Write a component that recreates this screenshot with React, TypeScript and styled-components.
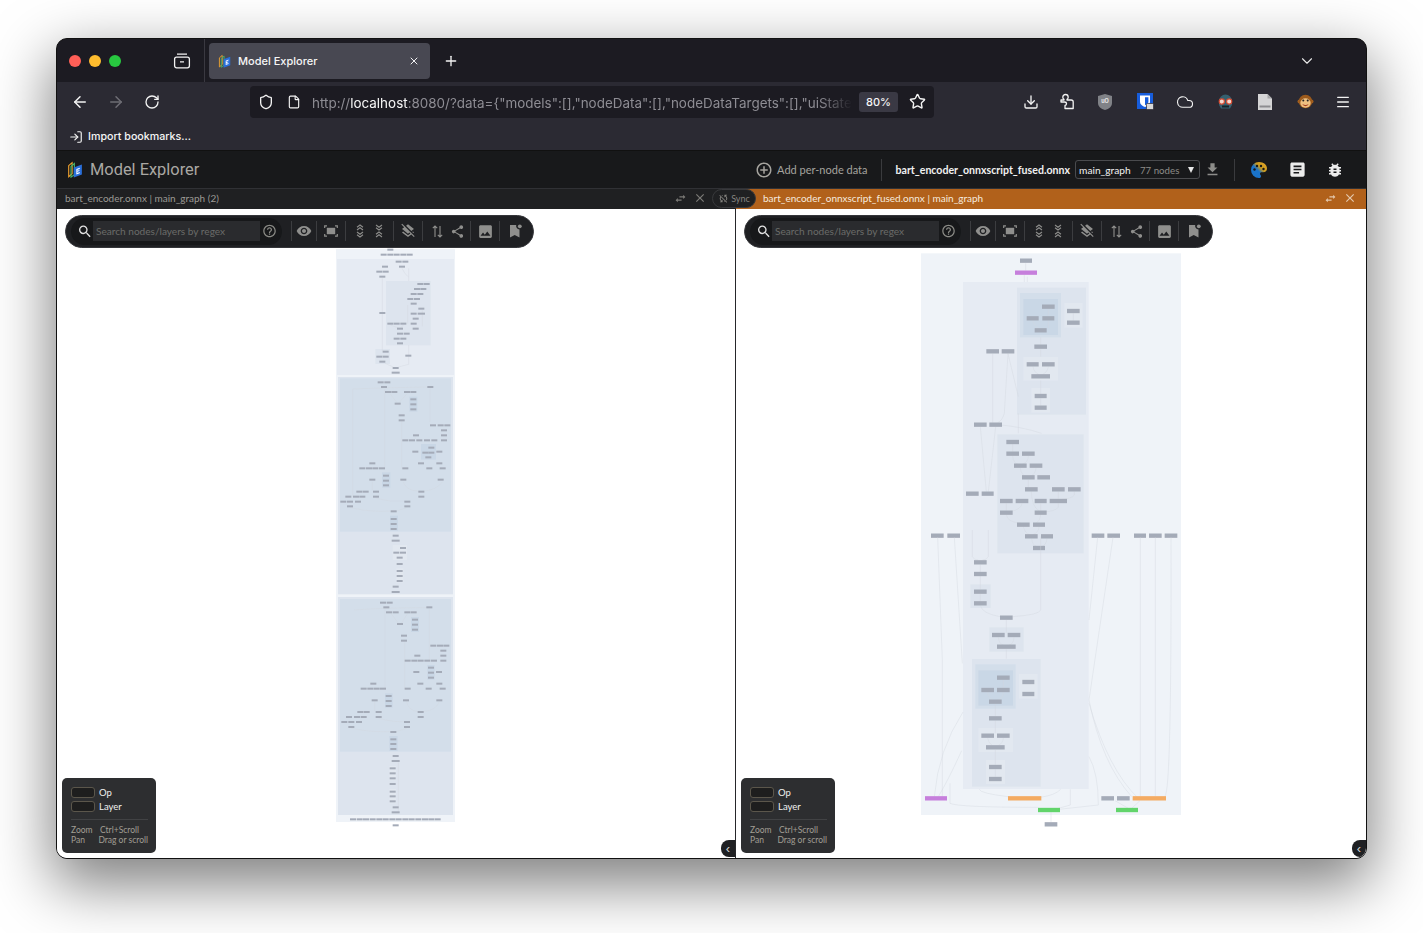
import React from 'react'
import styled, { createGlobalStyle } from 'styled-components'
import { ArrowLeft, ArrowRight, ChevronDown, Cloud, Download, File, LogIn, Menu, Plus, RotateCw, Shield, Star, X } from 'lucide-react'
import { MdArticle, MdBugReport, MdClose, MdFileDownload, MdHelpOutline, MdImage, MdLayersClear, MdOutlineAddCircleOutline, MdSearch, MdShare, MdSwapHoriz, MdSyncDisabled, MdVisibility } from 'react-icons/md'

type GraphNode = [number, number, number?, string?]
type Box = [number, number, number, number, string]

interface Section {
    ox: number
    oy: number
    boxes: Box[]
    nodes: GraphNode[]
    edges: string[]
}

const L0 = '#eff3f8'
const L1 = '#e6ebf3'
const L1B = '#e2e8f0'
const L2 = '#dde4ee'
const L3 = '#d3deea'
const L4 = '#c9d7e6'

const leftGraph: Section[] = [
    {
        ox: 330,
        oy: 245,
        boxes: [
            [18, 12, 375, 1731, L0],
            [21, 42, 372, 390, L1],
            [168, 108, 302, 301, L2],
            [136, 312, 180, 357, L2],
        ],
        nodes: [
            [181, 14], [161, 29], [181, 29], [200, 29], [220, 29], [239, 29], [206, 50], [226, 50], [165, 65], [216, 65],
            [148, 80], [167, 80], [157, 95], [271, 117], [290, 117], [261, 132], [280, 132], [251, 147], [271, 147],
            [241, 162], [261, 162], [251, 176], [274, 191], [251, 206], [274, 206, 22], [157, 204], [257, 221], [181, 236],
            [200, 236], [220, 236], [251, 236], [210, 251], [257, 251], [210, 266], [230, 266], [200, 281], [220, 281],
            [210, 295], [167, 320], [148, 335], [167, 335], [157, 350], [235, 332], [197, 369], [197, 383, 24],
        ],
        edges: ['M157 100V318', 'M236 70V108', 'M236 300V358', 'M216 70Q225 90 236 96', 'M233 180V236', 'M277 196V244', 'M181 240L210 251', 'M220 240L210 251', 'M165 355L190 366', 'M236 358L205 366'],
    },
    {
        ox: 330,
        oy: 375,
        boxes: [
            [24, 6, 369, 658, L2],
            [30, 10, 363, 470, L3],
            [238, 65, 262, 110, L4],
            [273, 207, 318, 254, L4],
            [156, 292, 181, 338, L4],
            [180, 422, 204, 467, L4],
            [188, 510, 231, 555, L1B],
            [199, 580, 220, 623, L1B],
        ],
        nodes: [
            [152, 22], [172, 22], [162, 36], [301, 36], [174, 51], [193, 51], [231, 51], [250, 51], [250, 73], [250, 88],
            [250, 103], [203, 86], [215, 121], [215, 136], [309, 151], [332, 151], [352, 151], [342, 166], [258, 181],
            [342, 181], [226, 196], [246, 196], [268, 196], [291, 196], [313, 196], [342, 196], [304, 218], [286, 233],
            [304, 233], [295, 247], [256, 230], [328, 230], [273, 265], [328, 265], [127, 265], [97, 280], [117, 280],
            [136, 280], [156, 280], [226, 280], [298, 280], [338, 280], [168, 302], [168, 317], [168, 331], [127, 314],
            [220, 314], [332, 314], [88, 350], [107, 350], [138, 350], [274, 350], [55, 365], [78, 365], [97, 365],
            [138, 365], [274, 365], [40, 380], [60, 380], [84, 380], [232, 380], [60, 394], [232, 394], [191, 409],
            [191, 432], [191, 447], [191, 462], [197, 482], [197, 497, 24], [219, 519], [199, 533], [219, 533], [209, 548],
            [209, 567], [209, 588], [209, 603], [209, 618], [197, 635], [197, 651, 24],
        ],
        edges: ['M68 42V365', 'M164 42V280', 'M215 140V280', 'M68 42Q160 38 295 36', 'M127 320V346', 'M220 320Q225 345 265 349', 'M338 320Q320 345 280 349', 'M138 370Q180 382 225 378', 'M60 398Q120 412 185 408', 'M230 398L200 408', 'M180 56L200 82', 'M231 56L208 82', 'M300 40V140', 'M256 185L256 192'],
    },
    {
        ox: 330,
        oy: 595,
        boxes: [
            [24, 6, 369, 660, L2],
            [30, 12, 363, 470, L3],
            [243, 66, 267, 111, L4],
            [292, 210, 314, 254, L4],
            [165, 295, 188, 338, L4],
            [178, 423, 203, 468, L4],
            [178, 513, 198, 556, L1B],
            [178, 582, 198, 625, L1B],
        ],
        nodes: [
            [159, 23], [179, 23], [169, 37], [298, 37], [177, 52], [197, 52], [232, 52], [251, 52], [255, 74], [255, 89],
            [255, 104], [210, 87], [222, 122], [222, 137], [310, 152], [330, 152], [349, 152], [340, 167], [340, 182],
            [262, 182], [233, 197], [253, 197], [272, 197], [292, 197], [312, 197], [340, 197], [303, 218], [303, 233],
            [303, 248], [259, 231], [327, 231], [271, 266], [328, 266], [130, 266], [101, 281], [121, 281], [140, 281],
            [159, 281], [233, 281], [296, 281], [338, 281], [176, 303], [176, 318], [176, 333], [134, 316], [228, 316],
            [328, 316], [91, 351], [110, 351], [146, 351], [272, 351], [57, 366], [81, 366], [101, 366], [146, 366],
            [272, 366], [43, 381], [64, 381], [87, 381], [231, 381], [64, 396], [231, 396], [190, 411], [190, 433],
            [190, 447], [190, 462], [197, 483], [197, 498, 24], [188, 520], [188, 535], [188, 550], [188, 567], [188, 590],
            [188, 604], [188, 619], [197, 637], [197, 652, 24],
            [69, 673], [89, 673], [108, 673], [128, 673], [148, 673], [167, 673], [187, 673], [206, 673], [226, 673],
            [245, 673], [265, 673], [285, 673], [304, 673], [323, 673], [197, 691],
        ],
        edges: ['M165 42V280', 'M298 42V197', 'M224 140V280', 'M205 502V650', 'M72 45Q160 38 292 38', 'M134 320V348', 'M230 320Q235 348 265 350', 'M328 320Q320 345 280 350', 'M146 370Q190 382 225 380', 'M64 400Q120 412 185 410', 'M230 400L198 410', 'M183 56L205 84', 'M232 56L215 84'],
    },
]

const rightGraph: Section[] = [
    {
        ox: 915,
        oy: 250,
        boxes: [
            [18, 10, 798, 1695, L0],
            [144, 96, 521, 1617, L1],
            [306, 113, 513, 494, L2],
            [315, 129, 438, 262, L3],
            [325, 147, 429, 255, L4],
            [448, 159, 503, 233, L1B],
            [325, 321, 429, 392, L1B],
            [349, 414, 405, 488, L1B],
            [247, 553, 506, 910, L2],
        ],
        nodes: [
            [333, 32, 36], [333, 68, 66, 'purple'], [400, 170, 38], [353, 205, 36], [400, 205, 36], [377, 241, 36],
            [475, 183, 38], [475, 218, 38], [377, 290, 38], [233, 304, 38], [279, 304, 38], [353, 343, 36], [400, 343, 38],
            [377, 379, 56], [377, 438, 36], [377, 473, 36], [196, 524, 38], [242, 524, 38], [293, 576, 38], [293, 611, 38],
            [340, 611, 38], [316, 647, 38], [363, 647, 38], [340, 682, 38], [386, 682, 38], [349, 718, 38], [430, 718, 38],
            [478, 718, 38], [172, 731, 38], [218, 731, 36], [274, 753, 38], [321, 753, 38], [377, 753, 36], [430, 753, 52],
            [274, 788, 38], [377, 788, 36], [325, 824, 38], [372, 824, 36], [349, 859, 38], [396, 859, 36], [372, 894, 36],
            [67, 857, 38], [116, 857, 38], [549, 857, 38], [596, 857, 38], [675, 857, 36], [721, 857, 38], [768, 857, 38],
        ],
        edges: [
            'M332 40V62', 'M328 75V96', 'M337 80V96', 'M400 178V198', 'M353 212Q360 232 372 236', 'M400 212V234', 'M475 190V212',
            'M377 262V284', 'M377 298V320', 'M354 350Q356 366 372 374', 'M400 350Q398 366 382 374', 'M377 392V432', 'M377 445V467',
            'M233 311V518', 'M279 311Q272 420 268 490Q262 512 248 518', 'M279 311L310 440', 'M248 524Q320 530 380 550', 'M310 490V550',
            'M196 530L214 725', 'M242 530L220 725', 'M293 582V605', 'M293 618Q295 640 310 643', 'M340 618Q340 636 322 643',
            'M316 654Q318 676 335 680', 'M363 654Q362 672 345 680', 'M340 690V712', 'M349 724Q350 770 372 782', 'M430 725V746',
            'M478 725V735Q470 746 440 748', 'M274 760V782', 'M321 760Q320 778 285 785', 'M377 760V782', 'M430 760V772Q420 784 385 786',
            'M274 794Q276 816 318 820', 'M377 794Q376 812 362 820', 'M325 830Q330 850 344 854', 'M372 830Q372 846 354 854', 'M350 866Q352 886 366 890', 'M396 866Q394 886 378 890',
        ],
    },
    {
        ox: 915,
        oy: 530,
        boxes: [
            [166, 163, 227, 234, L2],
            [223, 292, 326, 365, L2],
            [171, 387, 377, 770, L2],
            [181, 403, 302, 536, L3],
            [190, 421, 294, 527, L4],
            [312, 432, 368, 506, L1B],
            [190, 594, 294, 666, L1B],
            [213, 690, 270, 762, L1B],
        ],
        nodes: [
            [196, 97, 38], [196, 132, 38], [196, 185, 38], [196, 220, 38], [274, 263, 38], [250, 315, 38], [297, 315, 38],
            [274, 350, 56], [265, 443, 38], [218, 480, 38], [265, 480, 38], [241, 515, 38], [340, 456, 36], [340, 492, 36],
            [241, 565, 38], [218, 617, 38], [265, 617, 38], [241, 652, 56], [241, 711, 38], [241, 747, 38],
            [63, 805, 66, 'purple'], [329, 805, 100, 'orange'], [578, 805, 38], [625, 805, 38], [703, 805, 100, 'orange'],
            [402, 840, 66, 'green'], [636, 840, 66, 'green'], [408, 883, 38],
        ],
        edges: [
            'M172 0V80Q176 90 190 90', 'M220 0V80Q216 90 202 90', 'M196 104V126', 'M196 138V178', 'M196 192V214', 'M196 226Q200 250 255 260',
            'M377 20V240Q374 254 294 260', 'M274 270V308', 'M250 322Q252 342 265 345', 'M297 322Q296 342 282 345', 'M274 358V386',
            'M265 450V474', 'M218 487Q220 505 234 510', 'M265 487Q265 505 248 510', 'M241 522V558', 'M241 572V610',
            'M218 624Q220 640 232 646', 'M265 624Q264 640 250 646', 'M241 660V704', 'M241 718V740',
            'M68 22L82 390V800', 'M118 22L142 400', 'M144 546Q70 660 58 800', 'M140 662Q100 750 70 800', 'M105 760V820Q130 832 370 832',
            'M193 778Q195 790 280 800', 'M437 778Q420 796 375 802', 'M466 778V825L430 835', 'M548 22L522 270', 'M594 22L522 510Q560 700 650 800',
            'M522 520Q580 720 670 805', 'M676 22V798', 'M721 22V798', 'M768 22Q770 780 750 798', 'M522 680Q550 730 550 825L432 838',
            'M600 812L640 835', 'M675 812L650 835', 'M408 846V876',
        ],
    },
]

const nodeFill: Record<string, string> = {
    purple: '#c67fdc',
    orange: '#f4ab62',
    green: '#62d46b',
}

const Graph: React.FC<{ data: Section[]; viewBox: string; nodeHeight: number; defaultWidth: number }> = ({ data, viewBox, nodeHeight, defaultWidth }) => (
    <GraphSvg viewBox={viewBox}>
        {data.map(s => (
            <g key={`${s.ox}-${s.oy}`} transform={`translate(${s.ox} ${s.oy}) scale(${1 / 3})`}>
                {s.boxes.map(([x0, y0, x1, y1, color]) => (
                    <rect key={`${x0}-${y0}`} x={x0} y={y0} width={x1 - x0} height={y1 - y0} fill={color} />
                ))}
                <g fill="none" stroke="#d2d6dd" strokeWidth={1.2}>
                    {s.edges.map(d => (
                        <path key={d} d={d} />
                    ))}
                </g>
                {s.nodes.map(([cx, cy, w = defaultWidth, kind], i) => (
                    <rect key={i} x={cx - w / 2} y={cy - nodeHeight / 2} width={w} height={nodeHeight} fill={kind ? nodeFill[kind] : '#a4abb8'} />
                ))}
            </g>
        ))}
    </GraphSvg>
)

const BookLogo: React.FC<{ size: number }> = ({ size }) => (
    <svg width={size} height={size} viewBox="0 0 18 20">
        <path d="M1 5.500 5 2v13l-4 3.500z" fill="none" stroke="#f0a32f" strokeWidth="1.300" />
        <path d="M3.700 6.500 7.700 3v13l-4 3z" fill="none" stroke="#45b36b" strokeWidth="1.300" />
        <path d="M7 7.500 16.500 4v12L7 19.500z" fill="#2a6fdb" />
        <path d="M10 9.500 14 8v1.300l-2.800 1v1.200l2.400-.9v1.200l-2.400.9v1.300l2.800-1v1.300l-4 1.500z" fill="#fff" />
    </svg>
)

const ArchiveIcon = () => (
    <svg width="18" height="16" viewBox="0 0 18 16" fill="none" stroke="#f3f3f3" strokeWidth="1.3">
        <rect x="1.6" y="4.2" width="14.8" height="10.6" rx="2" />
        <path d="M4 1.2h10M7 8.8h4" />
    </svg>
)

const FitIcon = () => (
    <svg width="14" height="12" viewBox="0 0 14 12" fill="none" stroke="currentColor" strokeWidth="1.2">
        <path d="M.7 3V.8H3M11 .8h2.300V3M13.300 9v2.200H11M3 11.200H.7V9" />
        <rect x="2.800" y="2.800" width="8.400" height="6.400" fill="currentColor" stroke="none" />
    </svg>
)

const StackedChevrons: React.FC<{ inward?: boolean }> = ({ inward }) => (
    <svg width="8" height="14" viewBox="0 0 8 14" fill="none" stroke="currentColor" strokeWidth="1.1">
        {inward ? <path d="M1 1l3 2.200L7 1M1 3.800 4 6l3-2.200M1 10.200 4 8l3 2.200M1 13l3-2.200L7 13" /> : <path d="M1 3.200 4 1l3 2.200M1 6 4 3.800 7 6M1 8l3 2.200L7 8M1 10.800 4 13l3-2.200" />}
    </svg>
)

const SortIcon = () => (
    <svg width="11" height="13" viewBox="0 0 11 13" fill="none" stroke="currentColor" strokeWidth="1.1">
        <path d="M3 12V1M.8 3.200 3 1l2.200 2.200M8 1v11M5.800 9.800 8 12l2.200-2.200" />
    </svg>
)

const BookmarkDotIcon = () => (
    <svg width="13" height="14" viewBox="0 0 13 14" fill="currentColor">
        <path d="M1 1h6.200a3.600 3.600 0 0 0 3.300 4.500V13.500L5.700 11 1 13.500z" />
        <circle cx="10.800" cy="2.300" r="1.900" />
    </svg>
)

const PaletteIcon = () => (
    <svg width="18" height="18" viewBox="0 0 18 18">
        <defs>
            <linearGradient id="palette" x1="0" y1="1" x2="1" y2="0">
                <stop offset="0.45" stopColor="#1a73c9" />
                <stop offset="0.62" stopColor="#c99a1e" />
                <stop offset="1" stopColor="#e8a72a" />
            </linearGradient>
        </defs>
        <path d="M9 1a8 8 0 1 0 0 16c1.300 0 2-.9 2-1.800 0-1.300-1-1.500-1-2.500 0-.8.700-1.400 1.500-1.400H13a4 4 0 0 0 4-4C17 3.800 13.400 1 9 1z" fill="url(#palette)" />
        <circle cx="4.500" cy="8.500" r="1.200" fill="#16181a" />
        <circle cx="7" cy="5" r="1.200" fill="#16181a" />
        <circle cx="11" cy="5" r="1.200" fill="#16181a" />
        <circle cx="13.500" cy="8" r="1.200" fill="#16181a" />
    </svg>
)

const PuzzleIcon = () => (
    <svg width="16" height="17" viewBox="0 0 16 17" fill="none" stroke="#f3f3f3" strokeWidth="1.3" strokeLinejoin="round">
        <path d="M2 7h3v-.7C4 5.700 3.800 5 3.800 4.200 3.800 2.500 5 1.500 6.500 1.500S9.200 2.500 9.200 4.200c0 .8-.2 1.500-1.200 2.100V7h4.200a2 2 0 0 1 2 2v6.500H6v-3c1-.2 1.500-.8 1.500-1.700C7.500 9.700 6.700 9 5.500 9H2z" />
    </svg>
)

const UBlockIcon = () => (
    <svg width="16" height="18" viewBox="0 0 16 18">
        <path d="M8 1l7 2v7c0 3.500-3 6-7 7-4-1-7-3.500-7-7V3z" fill="#808287" />
        <text x="8" y="9.500" fontSize="5.500" fontWeight="700" fill="#e8e8e8" textAnchor="middle" fontFamily="Inter, sans-serif">uO</text>
    </svg>
)

const BitwardenIcon = () => (
    <svg width="17" height="17" viewBox="0 0 17 17">
        <rect width="16" height="16" fill="#175ddc" />
        <path d="M3 2.500h10V9c0 2.500-2.500 4-5 5-2.500-1-5-2.500-5-5z" fill="#fff" />
        <path d="M8 4.200h3.400V9c0 1.400-1.600 2.400-3.400 3.200z" fill="#175ddc" />
        <rect x="9.500" y="10.500" width="7" height="6" rx="1" fill="#d8d8d8" stroke="#2b2a33" strokeWidth="0.7" />
    </svg>
)

const GlassesIcon = () => (
    <svg width="17" height="17" viewBox="0 0 17 17">
        <path d="M2 8a6.500 6.500 0 0 1 13 0v4l-2 3.500H4L2 12z" fill="#35606f" />
        <circle cx="4.800" cy="8.500" r="2.600" fill="#f3d9cf" stroke="#d9492f" strokeWidth="1.100" />
        <circle cx="12.200" cy="8.500" r="2.600" fill="#f3d9cf" stroke="#d9492f" strokeWidth="1.100" />
        <rect x="5" y="12.500" width="7" height="2" fill="#13232a" />
    </svg>
)

const DocIcon = () => (
    <svg width="14" height="16" viewBox="0 0 14 16">
        <path d="M0 0h9.500L14 4.500V16H0z" fill="#d5d5d6" />
        <path d="M9.500 0v4.500H14z" fill="#a6a6a8" />
        <rect x="1.500" y="11.500" width="11" height="2" fill="#8d8d90" />
    </svg>
)

const MonkeyIcon = () => (
    <svg width="17" height="17" viewBox="0 0 17 17">
        <circle cx="2.500" cy="8.500" r="2" fill="#a5601f" />
        <circle cx="14.500" cy="8.500" r="2" fill="#a5601f" />
        <circle cx="8.500" cy="8.500" r="6.800" fill="#9c5a1c" />
        <ellipse cx="8.500" cy="10" rx="5.200" ry="4.700" fill="#edbf81" />
        <circle cx="6.300" cy="7.400" r="1" fill="#222" />
        <circle cx="10.700" cy="7.400" r="1" fill="#222" />
        <path d="M5.200 10.800q3.300 2.400 6.600 0-1 2.400-3.300 2.400t-3.300-2.400z" fill="#a33a1e" />
    </svg>
)

const Toolbar: React.FC = () => (
    <FloatingBar>
        <SearchPill>
            <MdSearch size={17} color="#e2e2e2" />
            <SearchInput>Search nodes/layers by regex</SearchInput>
            <MdHelpOutline size={16} color="#8b8b86" />
        </SearchPill>
        <BarGroup $w={26}>
            <MdVisibility size={16} />
        </BarGroup>
        <BarGroup $w={29}>
            <FitIcon />
        </BarGroup>
        <BarGroup $w={48} $gap={11}>
            <StackedChevrons />
            <StackedChevrons inward />
        </BarGroup>
        <BarGroup $w={29}>
            <MdLayersClear size={16} />
        </BarGroup>
        <BarGroup $w={48} $gap={7} $pad={3}>
            <SortIcon />
            <MdShare size={15} />
        </BarGroup>
        <BarGroup $w={29}>
            <MdImage size={17} />
        </BarGroup>
        <BarGroup $w={30} $last>
            <BookmarkDotIcon />
        </BarGroup>
    </FloatingBar>
)

const Legend: React.FC = () => (
    <LegendCard>
        <LegendRow>
            <Swatch />
            Op
        </LegendRow>
        <LegendRow>
            <Swatch />
            Layer
        </LegendRow>
        <LegendRule />
        <HelpRow>
            <span>Zoom</span>
            <span>Ctrl+Scroll</span>
        </HelpRow>
        <HelpRow>
            <span>Pan</span>
            <span>Drag or scroll</span>
        </HelpRow>
    </LegendCard>
)

const BarActions: React.FC = () => (
    <TitleActions>
        <MdSwapHoriz size={13} />
        <MdClose size={14} />
    </TitleActions>
)

const App: React.FC = () => (
    <Page>
        <GlobalStyle />
        <Window>
            <TabStrip>
                <Light $color="#ff5f57" />
                <Light $color="#febc2e" />
                <Light $color="#28c840" />
                <ArchiveSlot>
                    <ArchiveIcon />
                </ArchiveSlot>
                <TabDivider />
                <Tab>
                    <BookLogo size={14} />
                    <TabLabel>Model Explorer</TabLabel>
                    <X size={12} color="#f3f3f3" />
                </Tab>
                <NewTab>
                    <Plus size={16} color="#f3f3f3" />
                </NewTab>
                <TabMenu>
                    <ChevronDown size={18} strokeWidth={1.5} color="#e8e8e8" />
                </TabMenu>
            </TabStrip>
            <NavBar>
                <NavSlot $w={36}>
                    <ArrowLeft size={18} />
                </NavSlot>
                <NavSlot $w={36} $dim>
                    <ArrowRight size={18} />
                </NavSlot>
                <NavSlot $w={36}>
                    <RotateCw size={16} />
                </NavSlot>
                <UrlBar>
                    <Shield size={16} color="#f3f3f3" />
                    <PageIcon>
                        <File size={14} color="#f3f3f3" />
                    </PageIcon>
                    <UrlText>
                        http://<b>localhost</b>:8080/?data={'{'}"models":[],"nodeData":[],"nodeDataTargets":[],"uiState
                    </UrlText>
                    <ZoomPill>80%</ZoomPill>
                    <Star size={17} color="#f3f3f3" />
                </UrlBar>
                <Extensions>
                    <NavSlot $w={36}>
                        <Download size={16} />
                    </NavSlot>
                    <NavSlot $w={36}>
                        <PuzzleIcon />
                    </NavSlot>
                    <NavSlot $w={40}>
                        <UBlockIcon />
                    </NavSlot>
                    <NavSlot $w={40}>
                        <BitwardenIcon />
                    </NavSlot>
                    <NavSlot $w={40}>
                        <Cloud size={18} strokeWidth={1.5} />
                    </NavSlot>
                    <NavSlot $w={40}>
                        <GlassesIcon />
                    </NavSlot>
                    <NavSlot $w={40}>
                        <DocIcon />
                    </NavSlot>
                    <NavSlot $w={40}>
                        <MonkeyIcon />
                    </NavSlot>
                    <NavSlot $w={36}>
                        <Menu size={16} />
                    </NavSlot>
                </Extensions>
            </NavBar>
            <BookmarksBar>
                <LogIn size={14} color="#f3f3f3" />
                Import bookmarks...
            </BookmarksBar>
            <AppHeader>
                <BookLogo size={17} />
                <AppTitle>Model Explorer</AppTitle>
                <HeaderRight>
                    <AddData>
                        <MdOutlineAddCircleOutline size={18} />
                        Add per-node data
                    </AddData>
                    <HeaderRule />
                    <FileName>bart_encoder_onnxscript_fused.onnx</FileName>
                    <GraphSelect>
                        <b>main_graph</b>
                        <small>77 nodes</small>
                        <i />
                    </GraphSelect>
                    <MdFileDownload size={17} color="#8d8d8a" />
                    <HeaderRule $tight />
                    <HeaderSlot>
                        <PaletteIcon />
                    </HeaderSlot>
                    <HeaderSlot>
                        <MdArticle size={19} />
                    </HeaderSlot>
                    <HeaderSlot>
                        <MdBugReport size={18} />
                    </HeaderSlot>
                </HeaderRight>
            </AppHeader>
            <Panes>
                <Pane $w={678}>
                    <TitleBar>
                        bart_encoder.onnx | main_graph (2)
                        <BarActions />
                    </TitleBar>
                    <Canvas>
                        <Graph data={leftGraph} viewBox="57 209 678 649" nodeHeight={6} defaultWidth={18} />
                        <Toolbar />
                        <Legend />
                        <CollapseTab>‹</CollapseTab>
                    </Canvas>
                </Pane>
                <Pane $right>
                    <TitleBar $active>
                        <SyncChip>
                            <MdSyncDisabled size={11} />
                            Sync
                        </SyncChip>
                        bart_encoder_onnxscript_fused.onnx | main_graph
                        <BarActions />
                    </TitleBar>
                    <Canvas>
                        <Graph data={rightGraph} viewBox="736 209 630 649" nodeHeight={13} defaultWidth={38} />
                        <Toolbar />
                        <Legend />
                        <CollapseTab>‹</CollapseTab>
                    </Canvas>
                </Pane>
            </Panes>
        </Window>
    </Page>
)

export default App

const GlobalStyle = createGlobalStyle`
    html, body {
        margin: 0;
        background: #fff;
    }
`

const Page = styled.div`
    width: 1423px;
    height: 933px;
    overflow: hidden;
    padding: 38px 0 0 56px;
    box-sizing: border-box;
    font-family: Inter, 'Liberation Sans', sans-serif;
`

const Window = styled.div`
    width: 1311px;
    height: 821px;
    box-sizing: border-box;
    border: 1px solid #111;
    border-radius: 11px;
    overflow: hidden;
    display: flex;
    flex-direction: column;
    background: #1c1b22;
    box-shadow: 0 22px 60px 4px rgba(0, 0, 0, 0.5);
`

const TabStrip = styled.div`
    height: 43px;
    flex: none;
    display: flex;
    align-items: center;
    padding-left: 12px;
    background: #1c1b22;
`

const Light = styled.span<{ $color: string }>`
    width: 12px;
    height: 12px;
    border-radius: 50%;
    background: ${props => props.$color};
    &:not(:first-child) {
        margin-left: 8px;
    }
`

const ArchiveSlot = styled.div`
    width: 28px;
    margin-left: 47px;
    display: flex;
    justify-content: center;
`

const TabDivider = styled.div`
    width: 1px;
    height: 100%;
    margin: 0 4px 0 8px;
    background: #3a3941;
`

const Tab = styled.div`
    width: 221px;
    height: 36px;
    box-sizing: border-box;
    padding: 0 10px 0 9px;
    display: flex;
    align-items: center;
    border-radius: 4px;
    background: #484852;
`

const TabLabel = styled.span`
    flex: 1;
    margin-left: 6px;
    font-size: 11px;
    font-weight: 500;
    color: #f6f6f6;
`

const NewTab = styled.div`
    width: 42px;
    display: flex;
    justify-content: center;
`

const TabMenu = styled.div`
    width: 40px;
    margin: 0 39px 0 auto;
    display: flex;
    justify-content: center;
`

const NavBar = styled.div`
    height: 38px;
    flex: none;
    box-sizing: border-box;
    display: flex;
    align-items: center;
    padding: 1px 5px 0;
    background: #2b2a33;
`

const NavSlot = styled.div<{ $w: number; $dim?: boolean }>`
    width: ${props => props.$w}px;
    display: flex;
    justify-content: center;
    color: ${props => (props.$dim ? '#6e6d74' : '#f3f3f3')};
`

const UrlBar = styled.div`
    width: 684px;
    height: 32px;
    box-sizing: border-box;
    margin-left: 80px;
    padding: 0 8px;
    display: flex;
    align-items: center;
    border-radius: 4px;
    background: #1c1b22;
`

const PageIcon = styled.span`
    display: flex;
    margin-left: 13px;
`

const UrlText = styled.div`
    width: 540px;
    flex: none;
    margin: 3px 7px 0 11px;
    overflow: hidden;
    white-space: nowrap;
    font-size: 13.45px;
    color: #8e8d94;
    -webkit-mask-image: linear-gradient(to right, #000 94%, transparent);
    mask-image: linear-gradient(to right, #000 94%, transparent);
    b {
        font-weight: 400;
        color: #f6f6f6;
    }
`

const ZoomPill = styled.div`
    width: 39px;
    height: 20px;
    flex: none;
    margin-right: 11px;
    display: flex;
    align-items: center;
    justify-content: center;
    border-radius: 3px;
    background: #3a3944;
    font-size: 11px;
    font-weight: 500;
    color: #f6f6f6;
`

const Extensions = styled.div`
    margin-left: auto;
    display: flex;
    align-items: center;
`

const BookmarksBar = styled.div`
    height: 30px;
    flex: none;
    box-sizing: border-box;
    padding: 3px 0 0 12px;
    display: flex;
    align-items: center;
    gap: 5px;
    background: #2b2a33;
    font-size: 10.7px;
    font-weight: 500;
    color: #f6f6f6;
`

const AppHeader = styled.div`
    height: 39px;
    flex: none;
    box-sizing: border-box;
    padding: 0 12px 0 10px;
    display: flex;
    align-items: center;
    border-top: 1px solid #111;
    border-bottom: 1px solid #303135;
    background: #18191b;
`

const AppTitle = styled.span`
    margin: -1px 0 0 6px;
    font-family: Roboto, sans-serif;
    font-size: 16.4px;
    color: #aaa8a3;
`

const HeaderRight = styled.div`
    margin-left: auto;
    display: flex;
    align-items: center;
`

const AddData = styled.div`
    display: flex;
    align-items: center;
    gap: 4px;
    font-family: Lato, sans-serif;
    font-size: 11px;
    color: #a5a39e;
`

const HeaderRule = styled.div<{ $tight?: boolean }>`
    width: 1px;
    height: 22px;
    margin: 0 ${props => (props.$tight ? 5 : 14)}px 0 13px;
    background: #3a3b3e;
`

const FileName = styled.span`
    font-family: Lato, sans-serif;
    font-size: 10.6px;
    font-weight: 700;
    color: #f1f1f1;
`

const GraphSelect = styled.div`
    width: 125px;
    height: 19px;
    box-sizing: border-box;
    margin: 0 4px 0 5px;
    padding: 0 5px 0 3px;
    display: flex;
    align-items: center;
    border: 1px solid #4a4b4e;
    border-radius: 3px;
    font-family: Lato, sans-serif;
    b {
        width: 61px;
        font-size: 10.2px;
        font-weight: 400;
        color: #f1f1f1;
    }
    small {
        flex: 1;
        font-size: 9.7px;
        color: #8d8c88;
    }
    i {
        border: 3.5px solid transparent;
        border-top: 6px solid #e8e8e8;
        border-bottom: 0;
    }
`

const HeaderSlot = styled.div`
    width: 38px;
    display: flex;
    justify-content: center;
    color: #ececec;
`

const Panes = styled.div`
    flex: 1;
    min-height: 0;
    display: flex;
    background: #fff;
`

const Pane = styled.div<{ $w?: number; $right?: boolean }>`
    ${props => (props.$w ? `width: ${props.$w}px;` : 'flex: 1;')}
    ${props => (props.$right ? 'border-left: 1px solid #26272a;' : '')}
    display: flex;
    flex-direction: column;
    min-width: 0;
`

const TitleBar = styled.div<{ $active?: boolean }>`
    position: relative;
    height: 20px;
    flex: none;
    box-sizing: border-box;
    display: flex;
    align-items: center;
    padding: 0 ${props => (props.$active ? '0 2px 27px' : '19px 2px 8px')};
    background: ${props => (props.$active ? '#b1611b' : '#1f2022')};
    font-family: Lato, sans-serif;
    font-size: 10px;
    color: ${props => (props.$active ? '#f6ebdf' : '#9c9a95')};
`

const TitleActions = styled.div`
    margin-left: auto;
    width: 42px;
    display: flex;
    align-items: center;
    gap: 6px;
    color: inherit;
    opacity: 0.75;
`

const SyncChip = styled.div`
    position: absolute;
    left: -24px;
    top: 0;
    width: 44px;
    height: 19px;
    box-sizing: border-box;
    display: flex;
    align-items: center;
    justify-content: center;
    gap: 2px;
    border: 1px solid #38393c;
    border-radius: 10px;
    background: #1f2022;
    font-size: 9px;
    color: #85837f;
`

const Canvas = styled.div`
    position: relative;
    flex: 1;
    min-height: 0;
    overflow: hidden;
    background: #fff;
`

const GraphSvg = styled.svg`
    display: block;
    width: 100%;
    height: 100%;
    filter: blur(0.4px);
`

const FloatingBar = styled.div`
    position: absolute;
    left: 8px;
    top: 6px;
    width: 469px;
    height: 33px;
    box-sizing: border-box;
    padding: 0 0 1px 5px;
    display: flex;
    align-items: center;
    border: 1px solid #35363a;
    border-radius: 17px;
    background: #1f2023;
    color: #8f8f8d;
`

const SearchPill = styled.div`
    width: 211px;
    height: 27px;
    flex: none;
    box-sizing: border-box;
    padding: 0 5px 0 6px;
    display: flex;
    align-items: center;
    border-radius: 14px;
    background: #17181a;
`

const SearchInput = styled.div`
    width: 167px;
    height: 20px;
    flex: none;
    box-sizing: border-box;
    margin-right: 2px;
    padding: 0 0 1px 3px;
    display: flex;
    align-items: center;
    background: #2a2b2e;
    font-family: Lato, sans-serif;
    font-size: 10.1px;
    color: #6b6b69;
`

const BarGroup = styled.div<{ $w: number; $gap?: number; $pad?: number; $last?: boolean }>`
    width: ${props => props.$w}px;
    height: 20px;
    flex: none;
    display: flex;
    align-items: center;
    justify-content: center;
    gap: ${props => props.$gap || 0}px;
    padding-left: ${props => props.$pad || 0}px;
    ${props => (props.$last ? '' : 'border-right: 1px solid #3c3d40;')}
    box-sizing: border-box;
    &:nth-child(2) {
        margin-left: 9px;
        border-left: 1px solid #3c3d40;
    }
`

const LegendCard = styled.div`
    position: absolute;
    left: 5px;
    bottom: 5px;
    width: 94px;
    height: 75px;
    box-sizing: border-box;
    padding: 8px 8px 0 9px;
    border-radius: 5px;
    background: #2d2e30;
    font-family: Lato, sans-serif;
`

const LegendRow = styled.div`
    height: 13.5px;
    display: flex;
    align-items: center;
    gap: 4px;
    font-size: 9.5px;
    color: #f1f1f1;
`

const Swatch = styled.span`
    width: 24px;
    height: 11px;
    box-sizing: border-box;
    border: 1px solid #5b564b;
    border-radius: 3px;
    background: #1e1e1e;
`

const LegendRule = styled.div`
    height: 1px;
    margin: 6px 0 5px;
    background: #414244;
`

const HelpRow = styled.div`
    height: 10px;
    display: flex;
    align-items: center;
    font-size: 8.5px;
    color: #a29e94;
    span:first-child {
        width: 29px;
    }
    span:last-child {
        white-space: nowrap;
    }
`

const CollapseTab = styled.div`
    position: absolute;
    right: 0;
    bottom: 1px;
    width: 14px;
    height: 17px;
    display: flex;
    align-items: center;
    justify-content: center;
    border-radius: 8px 0 0 8px;
    background: #1f2023;
    font-family: 'Liberation Sans', sans-serif;
    font-size: 13px;
    color: #d8d8d8;
`
